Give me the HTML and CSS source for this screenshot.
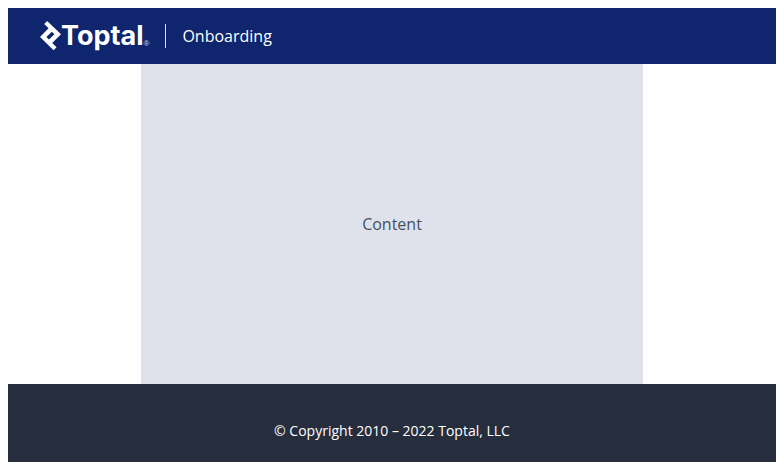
FILE: index.html
```html
<!DOCTYPE html>
<html lang="en">
<head>
<meta charset="utf-8">
<meta name="viewport" content="width=device-width, initial-scale=1">
<title>Onboarding</title>
<link rel="stylesheet" href="styles.css">
</head>
<body>
<header class="header">
  <a class="logo" href="#">
    <svg class="logo-mark" viewBox="0 0 21 30" width="21" height="30" aria-hidden="true">
      <path fill="#fff" fill-rule="evenodd" d="M7.2 0 21 13.3 12.2 21.9 16.6 26.3 13.6 29.2 0 15.9 8.6 7.3 4.2 2.9ZM11.8 10.7 6.4 16 9 18.5 14.4 13.2Z"/>
    </svg>
    <span class="logo-name">Toptal</span>
    <span class="logo-reg">®</span>
  </a>
  <span class="divider"></span>
  <span class="title">Onboarding</span>
</header>
<main class="content">Content</main>
<footer class="footer">© Copyright 2010 – 2022 Toptal, LLC</footer>
</body>
</html>
```
FILE: styles.css
```css
body {
  margin: 8px;
  background: #fff;
  font-family: "Open Sans", sans-serif;
  font-size: 16px;
  line-height: 24px;
}

.header {
  display: flex;
  align-items: center;
  height: 56px;
  padding: 0 32px;
  box-sizing: border-box;
  background: #0f256e;
  color: #fff;
}

.logo {
  display: flex;
  align-items: center;
  color: #fff;
  text-decoration: none;
}

.logo-name {
  font-family: Inter, sans-serif;
  font-size: 27px;
  font-weight: 700;
  line-height: 30px;
}

.logo-reg {
  align-self: flex-end;
  font-family: "Liberation Sans", sans-serif;
  font-size: 8px;
  line-height: 14px;
  opacity: 0.8;
}

.divider {
  width: 1px;
  height: 24px;
  margin: 0 16px;
  background: #dfe2ea;
}

.content {
  display: flex;
  align-items: center;
  justify-content: center;
  max-width: 502px;
  min-height: 320px;
  margin: 0 auto;
  background: #dfe2ea;
  color: #455065;
}

.footer {
  padding: 36px 32px 20px;
  background: #262d3d;
  color: #fff;
  font-size: 14px;
  line-height: 22px;
  text-align: center;
}
```
